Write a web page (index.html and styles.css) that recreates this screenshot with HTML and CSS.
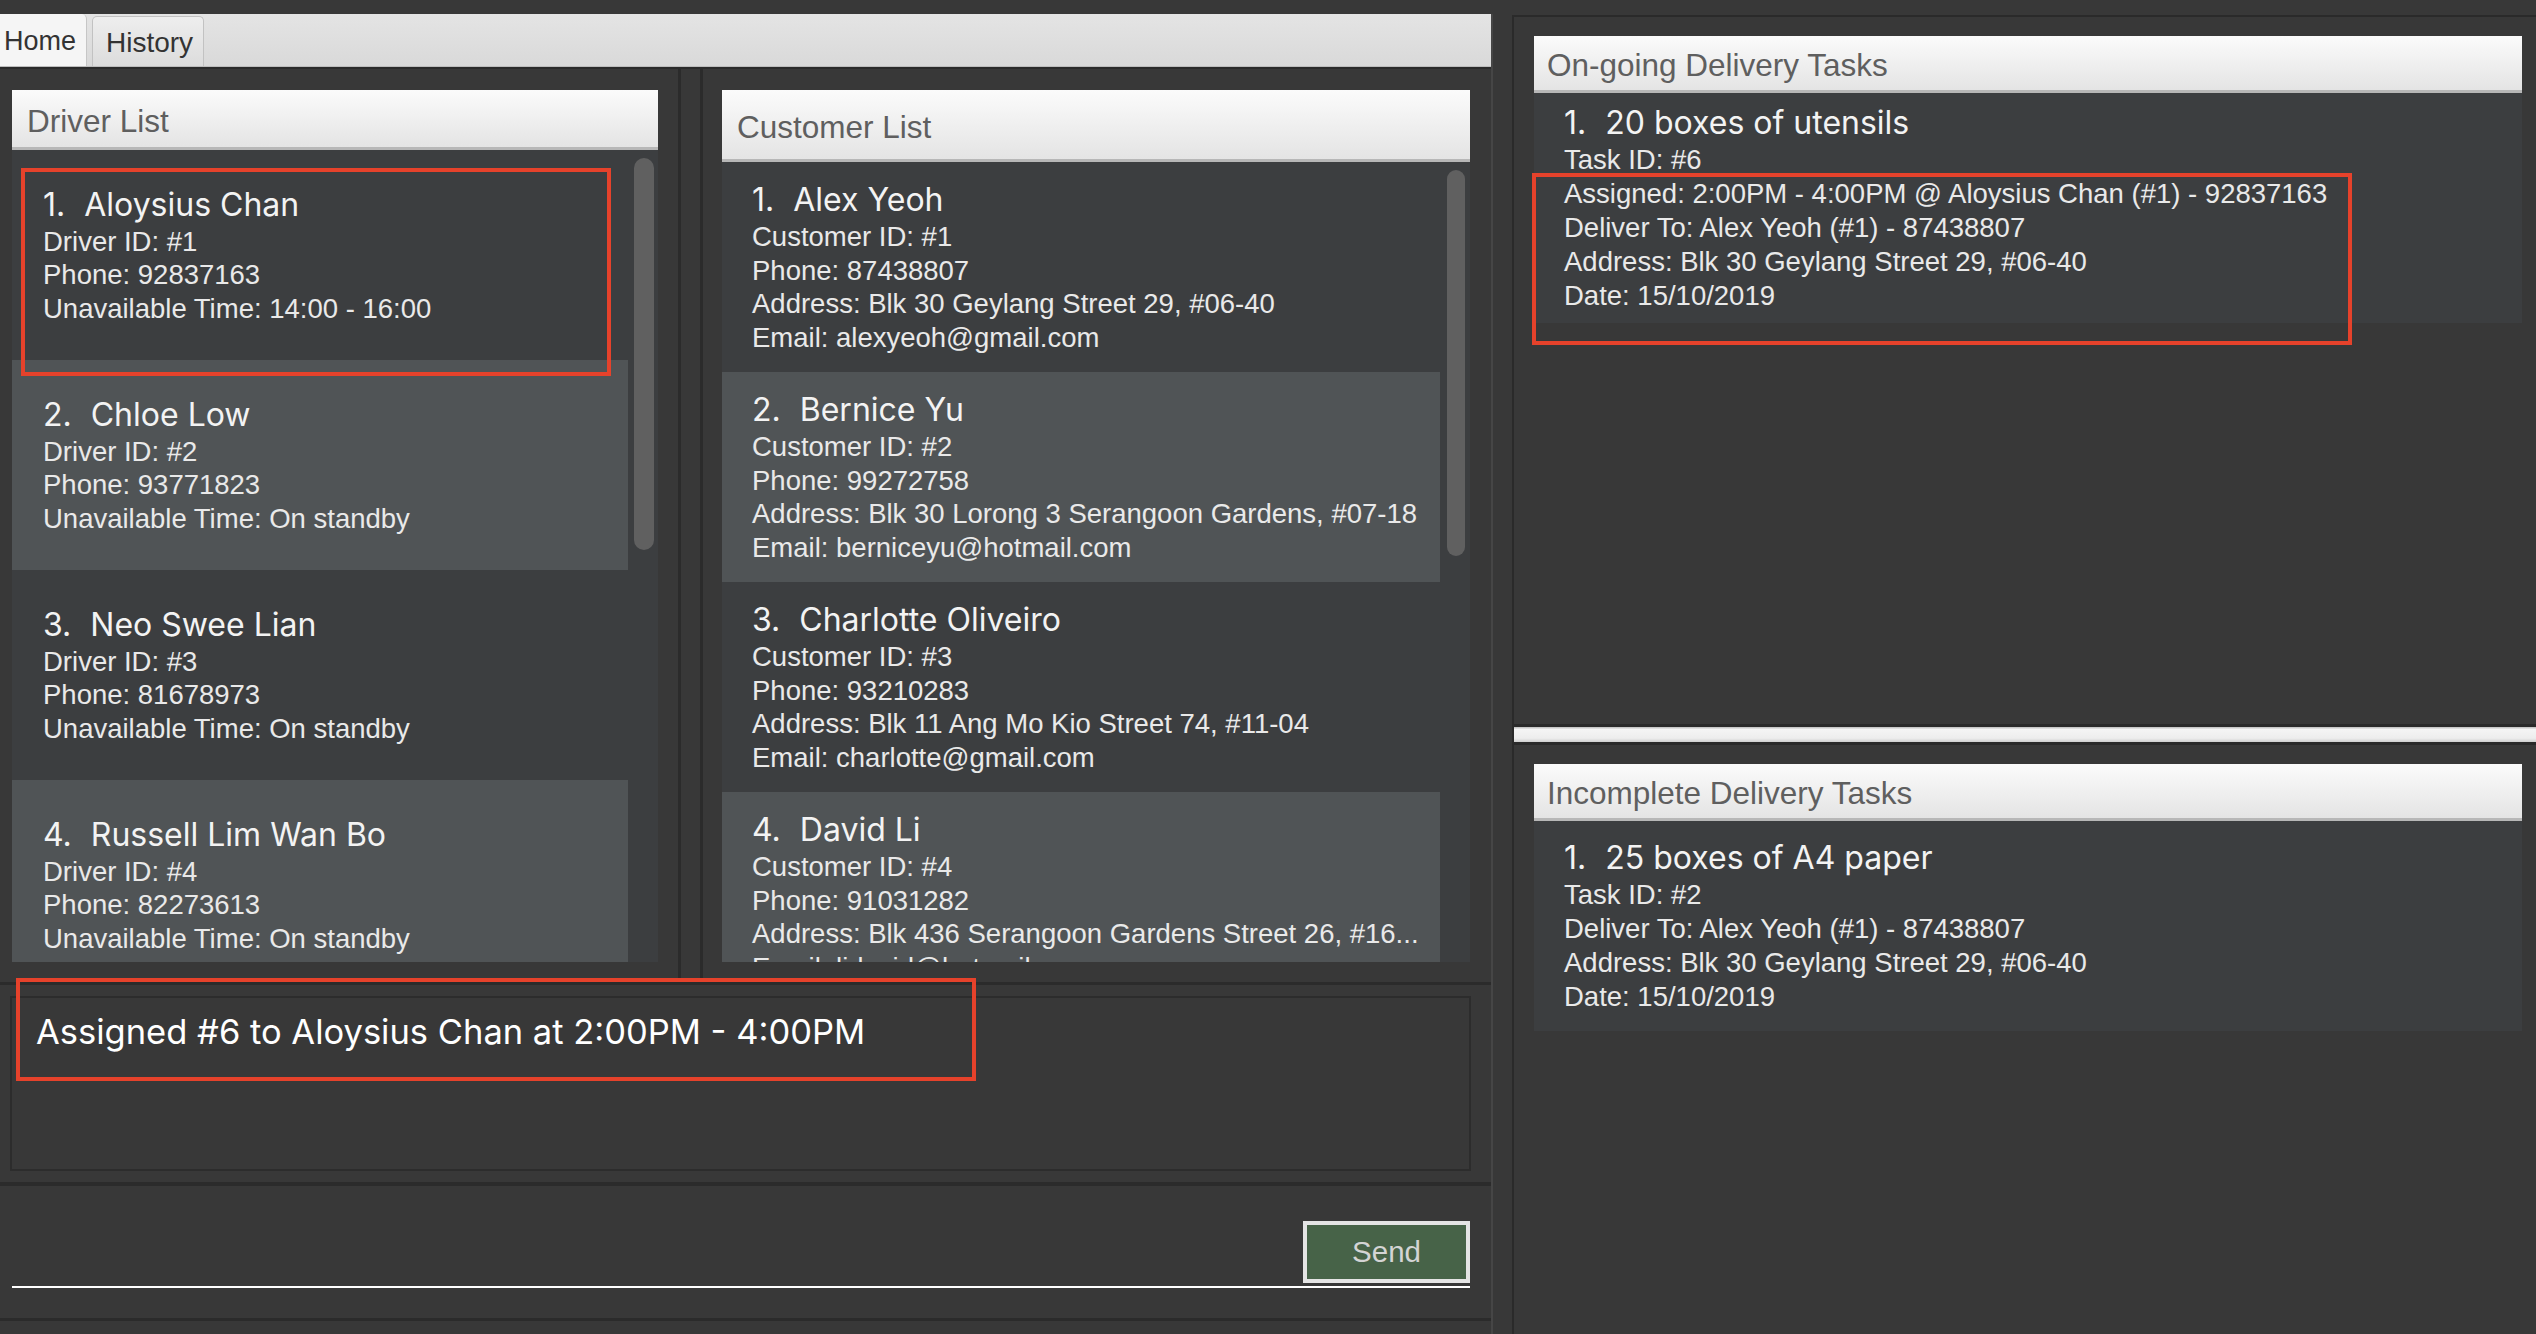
FILE: index.html
```html
<!DOCTYPE html>
<html lang="en">
<head>
<meta charset="utf-8">
<title>Deliveria</title>
<link rel="stylesheet" href="styles.css">
</head>
<body>
<div class="window">
  <div class="left">
    <div class="tabbar">
      <div class="tab active">Home</div>
      <div class="tab">History</div>
    </div>
    <div class="lists">
      <div class="col driver-col">
        <div class="panel-header driver-header">Driver List</div>
        <div class="listview">
          <div class="cells">
            <div class="card">
              <div class="title"><span class="idx">1.</span>Aloysius Chan</div>
              <div class="line">Driver ID: #1</div>
              <div class="line">Phone: 92837163</div>
              <div class="line">Unavailable Time: 14:00 - 16:00</div>
            </div>
            <div class="card alt">
              <div class="title"><span class="idx">2.</span>Chloe Low</div>
              <div class="line">Driver ID: #2</div>
              <div class="line">Phone: 93771823</div>
              <div class="line">Unavailable Time: On standby</div>
            </div>
            <div class="card">
              <div class="title"><span class="idx">3.</span>Neo Swee Lian</div>
              <div class="line">Driver ID: #3</div>
              <div class="line">Phone: 81678973</div>
              <div class="line">Unavailable Time: On standby</div>
            </div>
            <div class="card alt">
              <div class="title"><span class="idx">4.</span>Russell Lim Wan Bo</div>
              <div class="line">Driver ID: #4</div>
              <div class="line">Phone: 82273613</div>
              <div class="line">Unavailable Time: On standby</div>
            </div>
          </div>
          <div class="track driver-track"><div class="thumb"></div></div>
        </div>
      </div>
      <div class="splitter"></div>
      <div class="col customer-col">
        <div class="panel-header customer-header">Customer List</div>
        <div class="listview">
          <div class="cells">
            <div class="card cust">
              <div class="title"><span class="idx">1.</span>Alex Yeoh</div>
              <div class="line">Customer ID: #1</div>
              <div class="line">Phone: 87438807</div>
              <div class="line">Address: Blk 30 Geylang Street 29, #06-40</div>
              <div class="line">Email: alexyeoh@gmail.com</div>
            </div>
            <div class="card cust alt">
              <div class="title"><span class="idx">2.</span>Bernice Yu</div>
              <div class="line">Customer ID: #2</div>
              <div class="line">Phone: 99272758</div>
              <div class="line">Address: Blk 30 Lorong 3 Serangoon Gardens, #07-18</div>
              <div class="line">Email: berniceyu@hotmail.com</div>
            </div>
            <div class="card cust">
              <div class="title"><span class="idx">3.</span>Charlotte Oliveiro</div>
              <div class="line">Customer ID: #3</div>
              <div class="line">Phone: 93210283</div>
              <div class="line">Address: Blk 11 Ang Mo Kio Street 74, #11-04</div>
              <div class="line">Email: charlotte@gmail.com</div>
            </div>
            <div class="card cust alt">
              <div class="title"><span class="idx">4.</span>David Li</div>
              <div class="line">Customer ID: #4</div>
              <div class="line">Phone: 91031282</div>
              <div class="line">Address: Blk 436 Serangoon Gardens Street 26, #16...</div>
              <div class="line">Email: lidavid@hotmail.com</div>
            </div>
          </div>
          <div class="track customer-track"><div class="thumb"></div></div>
        </div>
      </div>
    </div>
    <div class="result">
      <div class="result-box">Assigned #6 to Aloysius Chan at 2:00PM - 4:00PM</div>
    </div>
    <div class="command">
      <div class="cmd-field">
        <button class="send">Send</button>
      </div>
    </div>
  </div>
  <div class="gap"></div>
  <div class="right">
    <div class="task-section ongoing">
      <div class="panel-header task-header">On-going Delivery Tasks</div>
      <div class="task-card">
        <div class="title"><span class="idx">1.</span>20 boxes of utensils</div>
        <div class="line">Task ID: #6</div>
        <div class="line">Assigned: 2:00PM - 4:00PM @ Aloysius Chan (#1) - 92837163</div>
        <div class="line">Deliver To: Alex Yeoh (#1) - 87438807</div>
        <div class="line">Address: Blk 30 Geylang Street 29, #06-40</div>
        <div class="line">Date: 15/10/2019</div>
      </div>
    </div>
    <div class="hsplit"><div class="band"></div></div>
    <div class="task-section incomplete">
      <div class="panel-header task-header">Incomplete Delivery Tasks</div>
      <div class="task-card">
        <div class="title"><span class="idx">1.</span>25 boxes of A4 paper</div>
        <div class="line">Task ID: #2</div>
        <div class="line">Deliver To: Alex Yeoh (#1) - 87438807</div>
        <div class="line">Address: Blk 30 Geylang Street 29, #06-40</div>
        <div class="line">Date: 15/10/2019</div>
      </div>
    </div>
  </div>
</div>
<div class="annot annot-driver"></div>
<div class="annot annot-result"></div>
<div class="annot annot-task"></div>
</body>
</html>
```

FILE: styles.css
```css
* {
  box-sizing: border-box;
  margin: 0;
  padding: 0;
}

html,
body {
  width: 2536px;
  height: 1334px;
  overflow: hidden;
  background: #383838;
}

body {
  position: relative;
  font-family: "Liberation Sans", Arial, sans-serif;
  color: #ececec;
}

.window {
  display: flex;
  height: 1334px;
  padding-top: 14px;
}

/* ---------- left column ---------- */
.left {
  width: 1493px;
  flex-shrink: 0;
  border-right: 2px solid #464646;
  display: flex;
  flex-direction: column;
}

.gap {
  width: 19px;
  flex-shrink: 0;
}

.tabbar {
  height: 53px;
  flex-shrink: 0;
  display: flex;
  align-items: flex-end;
  background: linear-gradient(#e4e4e4, #d9d9d9);
  border-bottom: 1px solid #bdbdbd;
}

.tab {
  display: flex;
  align-items: center;
  font-size: 28px;
  color: #333;
  height: 50px;
  width: 112px;
  margin-left: 5px;
  padding: 2px 0 0 13px;
  background: linear-gradient(#eeeeee, #dcdcdc);
  border: 1px solid #c2c2c2;
  border-bottom: none;
  border-radius: 5px 5px 0 0;
}

.tab.active {
  height: 52px;
  width: 87px;
  margin-left: 0;
  padding-left: 4px;
  background: #f5f5f5;
  border: none;
  border-right: 1px solid #c6c6c6;
  border-radius: 0 5px 0 0;
  font-size: 27px;
}

.lists {
  height: 918px;
  flex-shrink: 0;
  display: flex;
  border-top: 2px solid #2b2b2b;
  border-bottom: 3px solid #2b2b2b;
  overflow: hidden;
}

.col {
  display: flex;
  flex-direction: column;
  min-height: 0;
}

.driver-col {
  width: 678px;
  flex-shrink: 0;
  padding: 21px 20px 20px 12px;
}

.customer-col {
  flex: 1;
  padding: 21px 21px 20px 19px;
}

.splitter {
  width: 25px;
  flex-shrink: 0;
  border-left: 3px solid #2b2b2b;
  border-right: 3px solid #2b2b2b;
}

.panel-header {
  flex-shrink: 0;
  display: flex;
  align-items: center;
  padding: 5px 0 0 15px;
  font-size: 31.5px;
  color: #5f5f5f;
  background: linear-gradient(#fbfbfb, #e4e4e4);
  border-bottom: 3px solid #b7b7b7;
}

.driver-header {
  height: 60px;
}

.customer-header {
  height: 72px;
}

.listview {
  flex: 1;
  min-height: 0;
  display: flex;
  background: #3c3e40;
  overflow: hidden;
}

.cells {
  flex: 1;
  display: flex;
  flex-direction: column;
}

.card {
  height: 210px;
  flex-shrink: 0;
  display: flex;
  flex-direction: column;
  justify-content: center;
  padding-left: 31px;
  background: #3c3e40;
}

.card.cust {
  padding-left: 30px;
}

.card.alt {
  background: #505456;
}

.title {
  font-family: Inter, "Liberation Sans", sans-serif;
  font-size: 32px;
  line-height: 40px;
  color: #f3f3f3;
  white-space: nowrap;
}

.idx {
  padding-right: 19px;
}

.line {
  font-size: 27.5px;
  line-height: 33.5px;
  color: #e9e9e9;
  white-space: nowrap;
}

.track {
  width: 30px;
  flex-shrink: 0;
  padding-top: 8px;
}

.thumb {
  background: #606060;
  border-radius: 10px;
}

.driver-track {
  padding-left: 6px;
  padding-right: 4px;
}

.driver-track .thumb {
  height: 392px;
}

.customer-track {
  padding-left: 7px;
  padding-right: 5px;
}

.customer-track .thumb {
  height: 386px;
}

.result {
  height: 201px;
  flex-shrink: 0;
  padding: 11px 20px 0 10px;
  border-bottom: 4px solid #2b2b2b;
}

.result-box {
  height: 175px;
  border: 2px solid #2c2c2c;
  padding: 14px 0 0 24px;
  font-family: Inter, "Liberation Sans", sans-serif;
  font-size: 34.5px;
  line-height: 40px;
  color: #ffffff;
  white-space: nowrap;
}

.command {
  height: 135px;
  flex-shrink: 0;
  padding: 35px 21px 0 12px;
  border-bottom: 3px solid #2b2b2b;
}

.cmd-field {
  display: flex;
  justify-content: flex-end;
  padding-bottom: 3px;
  border-bottom: 2px solid #ffffff;
}

.send {
  width: 167px;
  height: 62px;
  border: 4px solid #e4e4e4;
  background: #476348;
  color: #d4d4d4;
  font-family: "Liberation Sans", Arial, sans-serif;
  font-size: 29.5px;
  display: flex;
  align-items: center;
  justify-content: center;
}

/* ---------- right column ---------- */
.right {
  flex: 1;
  margin-top: 1px;
  border-left: 2px solid #2a2a2a;
  border-top: 2px solid #2a2a2a;
  display: flex;
  flex-direction: column;
}

.task-section {
  padding: 19px 14px 0 20px;
  display: flex;
  flex-direction: column;
}

.ongoing {
  height: 707px;
  flex-shrink: 0;
}

.incomplete {
  flex: 1;
}

.task-header {
  height: 57px;
  padding-left: 13px;
}

.task-card {
  min-height: 210px;
  display: flex;
  flex-direction: column;
  justify-content: center;
  padding: 10px 0 10px 30px;
  background: #3c3e40;
}

.task-card .line {
  line-height: 34px;
}

.hsplit {
  height: 21px;
  flex-shrink: 0;
  border-top: 3px solid #2a2a2a;
  border-bottom: 3px solid #2a2a2a;
}

.band {
  height: 15px;
  background: linear-gradient(#c8c8c8 0, #c8c8c8 1px, #f5f5f5 2px, #ededed 75%, #cfcfcf 100%);
}

/* ---------- annotation overlays ---------- */
.annot {
  position: absolute;
  border: 4px solid #e6422b;
}

.annot-driver {
  left: 21px;
  top: 168px;
  width: 590px;
  height: 208px;
}

.annot-result {
  left: 16px;
  top: 978px;
  width: 960px;
  height: 103px;
}

.annot-task {
  left: 1532px;
  top: 173px;
  width: 820px;
  height: 172px;
}
```
